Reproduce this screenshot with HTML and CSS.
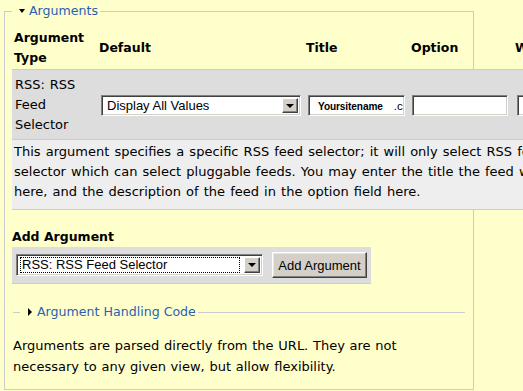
FILE: index.html
```html
<!DOCTYPE html>
<html>
<head>
<meta charset="utf-8">
<link rel="stylesheet" href="styles.css">
</head>
<body>
<div class="page">
  <fieldset class="box">
    <legend><a class="toggle open">Arguments</a></legend>
    <table class="args">
      <thead>
        <tr>
          <th class="c1">Argument<br>Type</th>
          <th class="c2">Default</th>
          <th class="c3">Title</th>
          <th class="c4">Option</th>
          <th class="c5">Wildcard</th>
        </tr>
      </thead>
      <tbody>
        <tr class="dark">
          <td class="c1 name">RSS: RSS<br>Feed<br>Selector</td>
          <td class="c2">
            <div class="select wide"><span class="sel-text">Display All Values</span><span class="arrow"></span></div>
          </td>
          <td class="c3">
            <div class="field"><b class="site">Yoursitename</b><span class="dot">.c</span></div>
          </td>
          <td class="c4"><div class="field"></div></td>
          <td class="c5"><div class="field"></div></td>
        </tr>
        <tr class="light">
          <td colspan="5" class="desc">This argument specifies a specific RSS feed selector; it will only select RSS feeds from that<br>selector which can select pluggable feeds. You may enter the title the feed will have<br>here, and the description of the feed in the option field here.</td>
        </tr>
      </tbody>
    </table>

    <div class="add">
      <div class="add-label">Add Argument</div>
      <div class="add-box">
        <div class="select add-select"><span class="sel-text focus">RSS: RSS Feed Selector</span><span class="arrow"></span></div>
        <button class="btn" type="button">Add Argument</button>
      </div>
    </div>

    <fieldset class="collapsed">
      <legend><a class="toggle closed">Argument Handling Code</a></legend>
    </fieldset>

    <p class="help">Arguments are parsed directly from the URL. They are not<br>necessary to any given view, but allow flexibility.</p>
  </fieldset>
</div>
</body>
</html>
```

FILE: styles.css
```css
html, body {
  margin: 0;
  padding: 0;
  overflow: hidden;
}

body {
  width: 523px;
  height: 391px;
  background: #ffffcc;
  font-family: "DejaVu Sans", Verdana, sans-serif;
  font-size: 13px;
  line-height: 20px;
  word-spacing: 0.6px;
  color: #000;
}

.page {
  padding: 1px 0 0 4px;
}

fieldset.box {
  margin: 0;
  width: 470px;
  box-sizing: border-box;
  border: 1px solid #cccccc;
  padding: 0 7px 12px 7px;
  min-width: 0;
}

legend {
  padding: 0 2px;
  line-height: 20px;
  font-size: 12.6px;
  word-spacing: 0;
}

.toggle {
  position: relative;
  display: inline-block;
  padding-left: 15px;
  color: #2b5fb3;
  text-decoration: none;
}

.toggle.open::before {
  content: "";
  position: absolute;
  left: 5px;
  top: 8px;
  border-left: 3.5px solid transparent;
  border-right: 3.5px solid transparent;
  border-top: 4px solid #000;
}

.toggle.closed::before {
  content: "";
  position: absolute;
  left: 6px;
  top: 6px;
  border-top: 4px solid transparent;
  border-bottom: 4px solid transparent;
  border-left: 4px solid #000;
}

table.args {
  border-collapse: collapse;
  table-layout: fixed;
  width: 680px;
  margin-top: 1px;
}

table.args th,
table.args td {
  box-sizing: border-box;
}

table.args th {
  text-align: left;
  font-weight: bold;
  font-size: 12.5px;
  vertical-align: middle;
  padding: 6px 2px 1px 2px;
  border-bottom: 1px solid #cccccc;
  word-spacing: 0;
}

th.c1, td.c1 { width: 85px; }
th.c2, td.c2 { width: 207px; }
th.c3, td.c3 { width: 105px; }
th.c4, td.c4 { width: 104px; }

table.args td {
  vertical-align: middle;
  padding: 0 3px 0 4px;
}

tr.dark {
  background: #dddddd;
  border-bottom: 1px solid #cccccc;
}

tr.dark td {
  padding-top: 5px;
  padding-bottom: 4px;
}

tr.dark td.c1 {
  padding-left: 3px;
}

tr.dark td.c4 {
  padding-left: 3px;
}

tr.light {
  background: #eeeeee;
  border-bottom: 1px solid #cccccc;
}

td.desc {
  white-space: nowrap;
  word-spacing: 1px;
  padding: 2px 3px 7px 2px !important;
}

/* form controls in the classic look */
.select {
  position: relative;
  box-sizing: border-box;
  height: 21px;
  background: #fff;
  border-top: 1px solid #808080;
  border-left: 1px solid #808080;
  border-right: 1px solid #ffffff;
  border-bottom: 1px solid #ffffff;
  box-shadow: inset 1px 1px 0 #404040, inset -1px -1px 0 #d4d0c8;
  font-family: "Liberation Sans", Arial, sans-serif;
  font-size: 13px;
  line-height: 17px;
  word-spacing: 0;
  padding: 1px 0 0 5px;
}

.select.wide {
  width: 200px;
}

.arrow {
  position: absolute;
  right: 2px;
  top: 2px;
  width: 16px;
  height: 15px;
  box-sizing: border-box;
  background: #d4d0c8;
  border-top: 1px solid #ffffff;
  border-left: 1px solid #ffffff;
  border-right: 1px solid #404040;
  border-bottom: 1px solid #404040;
  box-shadow: inset -1px -1px 0 #808080;
}

.arrow::after {
  content: "";
  position: absolute;
  left: 3px;
  top: 5px;
  border-left: 4px solid transparent;
  border-right: 4px solid transparent;
  border-top: 4px solid #000;
}

.field {
  box-sizing: border-box;
  width: 97px;
  height: 21px;
  background: #fff;
  border-top: 1px solid #808080;
  border-left: 1px solid #808080;
  border-right: 1px solid #ffffff;
  border-bottom: 1px solid #ffffff;
  box-shadow: inset 1px 1px 0 #404040, inset -1px -1px 0 #d4d0c8;
  font-family: "Liberation Sans", Arial, sans-serif;
  line-height: 17px;
  word-spacing: 0;
  padding: 1px 0 0 9px;
  white-space: nowrap;
  overflow: hidden;
}

.site {
  font-size: 10.1px;
  letter-spacing: -0.1px;
}

.dot {
  font-size: 11.5px;
  margin-left: 11px;
}

td.c4 .field {
  width: 96px;
}

/* add argument */
.add {
  margin-top: 17px;
}

.add-label {
  font-weight: bold;
  font-size: 12.5px;
  line-height: 20px;
  word-spacing: 0;
}

.add-box {
  display: inline-flex;
  align-items: center;
  gap: 9px;
  background: #dddddd;
  padding: 5px 4px 5px 4px;
  border-bottom: 1px solid #cccccc;
}

.add-select {
  width: 247px;
  height: 22px;
  padding: 1px 0 0 3px;
}

.add-select .arrow {
  height: 16px;
}

.sel-text.focus {
  display: inline-block;
  padding: 0 2px;
  line-height: 16px;
  outline: 1px dotted #000;
  outline-offset: -1px;
  width: 220px;
  box-sizing: border-box;
}

.btn {
  box-sizing: border-box;
  height: 26px;
  width: 95px;
  padding: 0;
  background: #d4d0c8;
  border-top: 1px solid #ffffff;
  border-left: 1px solid #ffffff;
  border-right: 1px solid #404040;
  border-bottom: 1px solid #404040;
  box-shadow: inset -1px -1px 0 #808080, inset 1px 1px 0 #e8e6e0;
  font-family: "Liberation Sans", Arial, sans-serif;
  font-size: 13px;
  word-spacing: 0;
  color: #000;
}

/* collapsed fieldset */
fieldset.collapsed {
  margin: 18px 1px 0 1px;
  padding: 0 0 0 7px;
  border: 0;
  border-top: 1px solid #cccccc;
  min-width: 0;
}

p.help {
  margin: 13px 0 0 1px;
  line-height: 21px;
}
```
